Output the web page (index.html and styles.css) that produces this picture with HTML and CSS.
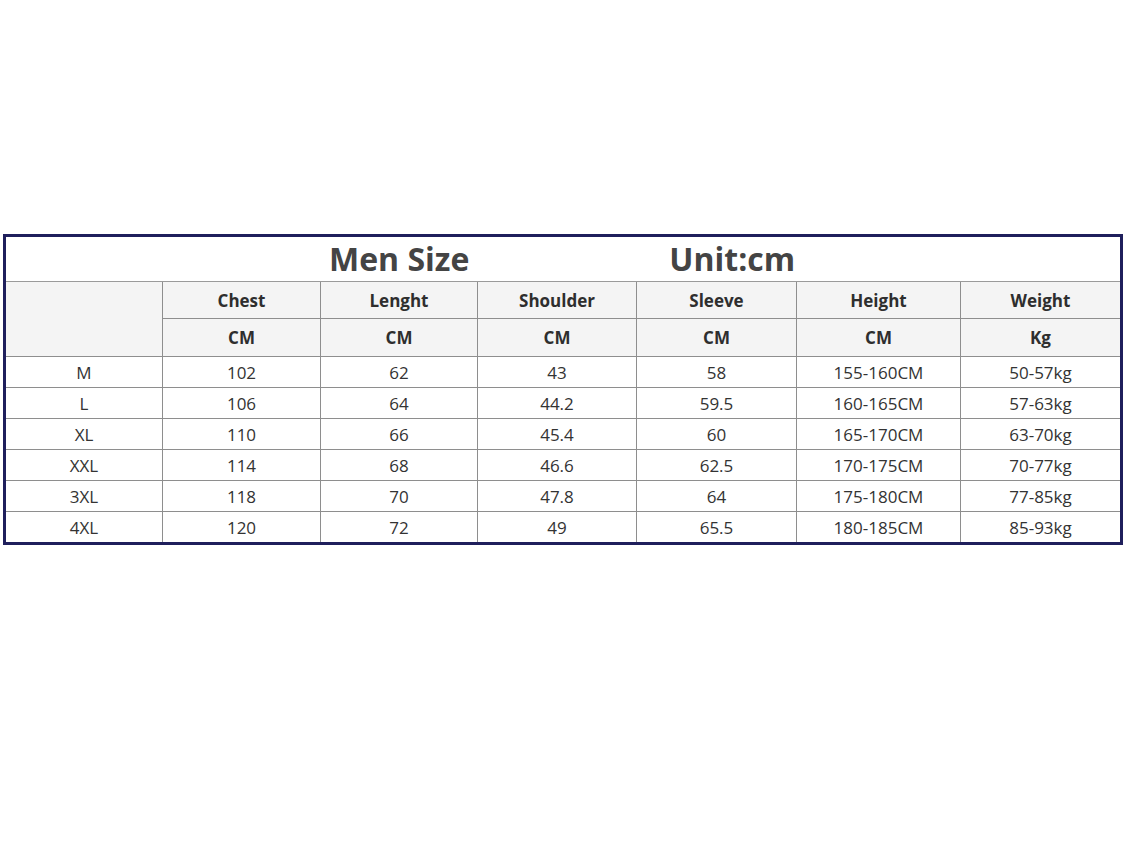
FILE: index.html
```html
<!DOCTYPE html>
<html>
<head>
<meta charset="utf-8">
<link rel="stylesheet" href="styles.css">
</head>
<body>
<table class="size-table">
  <colgroup>
    <col class="c1"><col class="c2"><col class="c3"><col class="c4"><col class="c5"><col class="c6"><col class="c7">
  </colgroup>
  <tr class="title-row">
    <td colspan="7" class="title-cell"><span class="t1">Men Size</span><span class="t2">Unit:cm</span></td>
  </tr>
  <tr class="head-row">
    <td rowspan="2" class="corner"></td>
    <td>Chest</td><td>Lenght</td><td>Shoulder</td><td>Sleeve</td><td>Height</td><td>Weight</td>
  </tr>
  <tr class="head-row head-row-2">
    <td>CM</td><td>CM</td><td>CM</td><td>CM</td><td>CM</td><td>Kg</td>
  </tr>
  <tr class="data-row"><td>M</td><td>102</td><td>62</td><td>43</td><td>58</td><td>155-160CM</td><td>50-57kg</td></tr>
  <tr class="data-row"><td>L</td><td>106</td><td>64</td><td>44.2</td><td>59.5</td><td>160-165CM</td><td>57-63kg</td></tr>
  <tr class="data-row"><td>XL</td><td>110</td><td>66</td><td>45.4</td><td>60</td><td>165-170CM</td><td>63-70kg</td></tr>
  <tr class="data-row"><td>XXL</td><td>114</td><td>68</td><td>46.6</td><td>62.5</td><td>170-175CM</td><td>70-77kg</td></tr>
  <tr class="data-row"><td>3XL</td><td>118</td><td>70</td><td>47.8</td><td>64</td><td>175-180CM</td><td>77-85kg</td></tr>
  <tr class="data-row"><td>4XL</td><td>120</td><td>72</td><td>49</td><td>65.5</td><td>180-185CM</td><td>85-93kg</td></tr>
</table>
</body>
</html>
```
FILE: styles.css
```css
html, body {
  margin: 0;
  padding: 0;
  background: #ffffff;
}
body {
  font-family: "Open Sans", "Liberation Sans", sans-serif;
  color: #333333;
  padding-top: 234px;
  padding-left: 3px;
}
.size-table {
  border-collapse: collapse;
  table-layout: fixed;
  width: 1120px;
  border: 3px solid #1f1f5c;
}
.c1 { width: 158px; }
.c2 { width: 158px; }
.c3 { width: 157px; }
.c4 { width: 159px; }
.c5 { width: 160px; }
.c6 { width: 164px; }
.c7 { width: 161px; }
.size-table td {
  border: 1px solid #8e8e8e;
  text-align: center;
  padding: 0;
  font-size: 17px;
}
.title-row td {
  height: 44px;
  border-bottom: 1px solid #9a9a9a;
}
.title-cell {
  text-align: left !important;
  font-weight: 700;
  font-size: 32px !important;
  color: #444444;
  padding-left: 323px !important;
  line-height: 44px;
}
.t2 {
  margin-left: 200px;
}
.head-row td {
  height: 36px;
  background: #f4f4f4;
  font-weight: 700;
  color: #2e2e2e;
}
.head-row-2 td {
  height: 37px;
}
.head-row .corner {
  background: #f4f4f4;
}
.data-row td {
  height: 30px;
  background: #ffffff;
  color: #333333;
}
```
